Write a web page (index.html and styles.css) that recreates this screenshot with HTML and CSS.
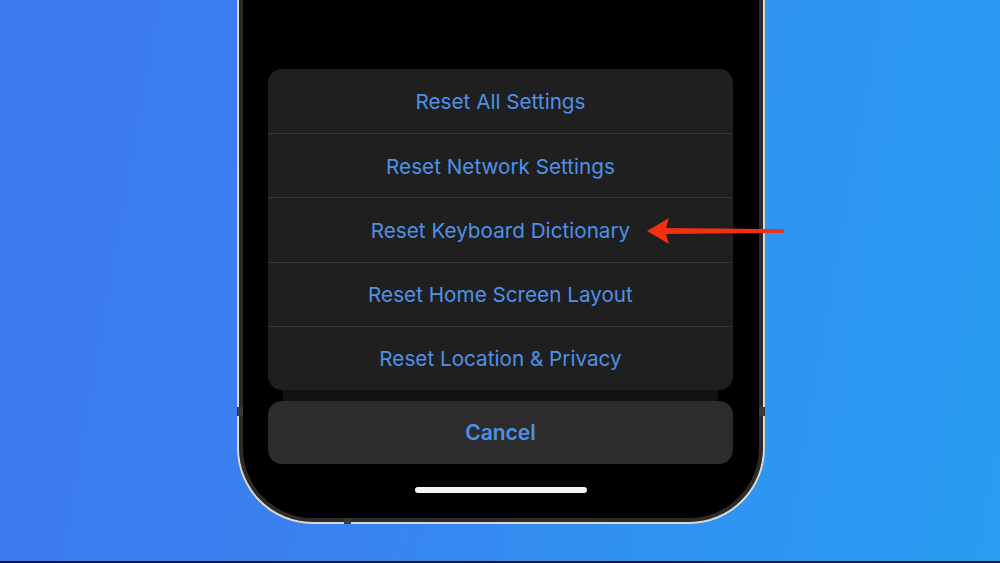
FILE: index.html
```html
<!DOCTYPE html>
<html>
<head>
<meta charset="utf-8">
<link rel="stylesheet" href="styles.css">
</head>
<body>
<div class="page">
  <div class="phone">
    <span class="notch notch-left"></span>
    <span class="notch notch-right"></span>
    <span class="notch notch-bottom"></span>
    <div class="sheet">
      <div class="row">Reset All Settings</div>
      <div class="row">Reset Network Settings</div>
      <div class="row">Reset Keyboard Dictionary</div>
      <div class="row">Reset Home Screen Layout</div>
      <div class="row">Reset Location &amp; Privacy</div>
    </div>
    <div class="gap"><div class="strip"></div></div>
    <div class="cancel">Cancel</div>
    <div class="home"></div>
  </div>
  <svg class="arrow" width="140" height="30" viewBox="0 0 140 30">
    <path d="M0 14 L22 1 L19 11 L137 12.3 L137 15.7 L19 17 L22 27 Z" fill="#f2300f"/>
  </svg>
</div>
</body>
</html>
```
FILE: styles.css
```css
html, body {
  margin: 0;
  padding: 0;
}
body {
  width: 1000px;
  height: 563px;
  overflow: hidden;
  font-family: Inter, "Open Sans", "Liberation Sans", sans-serif;
}
.page {
  position: relative;
  width: 1000px;
  height: 561px;
  overflow: hidden;
  border-bottom: 2px solid #0c1632;
  background: linear-gradient(100deg, #3b79ef 0%, #3b80ef 35%, #2f93f1 70%, #2a9cf2 100%);
  display: flex;
  justify-content: center;
  align-items: flex-start;
}
.phone {
  position: relative;
  box-sizing: border-box;
  width: 528px;
  height: 554px;
  margin-top: -30px;
  margin-left: 1px;
  background: #000;
  border: 2px solid #dcd8d0;
  border-top: none;
  border-radius: 0 0 76px 76px;
  box-shadow: inset 0 0 0 4px #2d2b29;
  padding-top: 99px;
  display: flex;
  flex-direction: column;
  align-items: center;
}
.notch {
  position: absolute;
  background: #3a3a3c;
}
.notch-left { left: -2px; top: 437px; width: 6px; height: 9px; }
.notch-right { right: -2px; top: 437px; width: 6px; height: 9px; }
.notch-bottom { left: 105px; bottom: -2px; width: 7px; height: 6px; }
.sheet {
  width: 465px;
  background: #1f1f1f;
  border-radius: 14px;
  overflow: hidden;
}
.row {
  height: 64.2px;
  display: flex;
  align-items: center;
  justify-content: center;
  color: #4d92e6;
  font-size: 20.7px;
  border-top: 1px solid #363636;
  box-sizing: border-box;
  padding-top: 1px;
}
.row:first-child {
  border-top: none;
}
.gap {
  width: 465px;
  height: 11px;
  display: flex;
  justify-content: center;
}
.strip {
  width: 435px;
  height: 100%;
  background: #121212;
}
.cancel {
  width: 465px;
  height: 63px;
  background: #2c2c2e;
  border-radius: 14px;
  display: flex;
  align-items: center;
  justify-content: center;
  color: #4d92e6;
  font-size: 21px;
  font-weight: 600;
}
.home {
  margin-top: 23px;
  width: 172px;
  height: 6px;
  border-radius: 3px;
  background: #f4f4f4;
}
.arrow {
  position: absolute;
  left: 647px;
  top: 217px;
}
```
